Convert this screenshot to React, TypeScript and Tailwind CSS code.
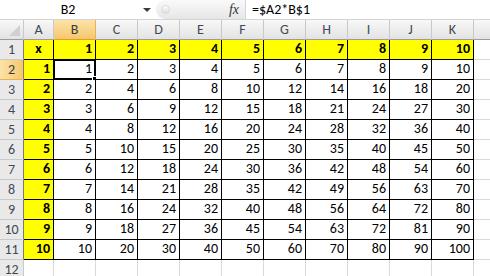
import React from 'react';

const COLS = ['A', 'B', 'C', 'D', 'E', 'F', 'G', 'H', 'I', 'J', 'K'];
const ROWS = [1, 2, 3, 4, 5, 6, 7, 8, 9, 10, 11, 12];

const font = { fontFamily: 'Carlito, Lato, "Open Sans", sans-serif' };

const FormulaBar = () => (
  <div className="flex h-[20px] border-b border-[#d4d4d4] bg-white">
    <div className="relative flex w-[156px] items-center justify-center">
      <span className="pr-[20px] text-[14px] text-black">B2</span>
      <span className="absolute right-[5px] top-[8px] h-0 w-0 border-x-[4px] border-t-[4px] border-x-transparent border-t-[#3c3c3c]" />
    </div>
    <div className="flex w-[89px] items-center rounded-l-full bg-gradient-to-b from-[#fafafa] to-[#e6e6e6] pl-[5px]">
      <span className="h-[9px] w-[9px] rounded-full border border-[#d9d9d9] bg-gradient-to-b from-[#fdfdfd] to-[#dcdcdc]" />
      <span className="ml-auto pr-[6px] text-[14px] italic text-[#333]" style={{ fontFamily: '"Liberation Serif", serif' }}>
        fx
      </span>
    </div>
    <div className="flex flex-1 items-center border-l border-[#d4d4d4] pl-[6px] text-[14px] text-black">=$A2*B$1</div>
  </div>
);

const ColHeader = ({ label }: { label: string }) => {
  const sel = label === 'B';
  return (
    <div
      className={
        'flex items-center justify-center border-b border-r text-[14px] ' +
        (sel
          ? 'border-b-[#e29a3b] border-r-[#e8b15a] bg-gradient-to-b from-[#fbe3a9] to-[#f5c76c] text-[#3a3a3a]'
          : 'border-b-[#9c9c9c] border-r-[#c9c9c9] bg-gradient-to-b from-[#f8f8f8] to-[#e3e3e3] text-[#3f4a56]')
      }
    >
      {label}
    </div>
  );
};

const RowHeader = ({ n }: { n: number }) => {
  const sel = n === 2;
  return (
    <div
      className={
        'flex items-center justify-center border-b text-[14px] ' +
        (n <= 11 ? 'border-r border-r-[#7a7a7a] ' : 'border-r border-r-[#c9c9c9] ') +
        (sel
          ? 'border-b-[#e8b15a] bg-gradient-to-r from-[#fbe3a9] to-[#f5c76c] text-[#3a3a3a]'
          : 'border-b-[#c9c9c9] bg-[#e9e9e9] text-[#3f4a56]')
      }
    >
      {n}
    </div>
  );
};

const Cell = ({ r, c }: { r: number; c: number }) => {
  if (r > 11) return <div className="border-b border-r border-[#dadada] bg-white" />;
  const yellow = r === 1 || c === 0;
  let text = '';
  if (r === 1) text = c === 0 ? 'x' : String(c);
  else text = c === 0 ? String(r - 1) : String((r - 1) * c);
  const active = r === 2 && c === 1;
  return (
    <div
      className={
        'relative flex items-end pb-[1px] text-[14px] leading-[18px] text-black border-b border-r border-black ' +
        (yellow ? 'bg-[#ffff00] font-bold ' : 'bg-white ') +
        (r === 1 && c === 0 ? 'justify-center' : 'justify-end pr-[3px]')
      }
    >
      {text}
      {active && (
        <>
          <span className="pointer-events-none absolute -left-[1px] -top-[1px] -right-[1px] -bottom-[1px] border-2 border-black" />
          <span className="absolute -bottom-[4px] -right-[4px] h-[7px] w-[7px] border border-white bg-black" />
        </>
      )}
    </div>
  );
};

export default function App() {
  return (
    <div className="h-[276px] w-[490px] overflow-hidden bg-white" style={font}>
      <FormulaBar />
      <div className="grid grid-cols-[24px_30px_repeat(10,42px)_1fr] grid-rows-[20px]" style={{ gridAutoRows: '20px' }}>
        <div className="relative border-b border-r border-b-[#9c9c9c] border-r-[#c9c9c9] bg-gradient-to-b from-[#f8f8f8] to-[#e3e3e3]">
          <span className="absolute bottom-[3px] right-[3px] h-0 w-0 border-l-[11px] border-t-[11px] border-l-transparent border-t-transparent border-b-0 border-r-0" style={{ borderBottom: '11px solid #d0d0d0', borderLeft: '11px solid transparent', borderTop: 0 }} />
        </div>
        {COLS.map(c => (
          <ColHeader key={c} label={c} />
        ))}
        <div className="border-b border-b-[#9c9c9c] bg-gradient-to-b from-[#f8f8f8] to-[#e3e3e3]" />
        {ROWS.map(r => (
          <React.Fragment key={r}>
            <RowHeader n={r} />
            {COLS.map((c, i) => (
              <Cell key={c} r={r} c={i} />
            ))}
            <div className="border-b border-[#dadada] bg-white" />
          </React.Fragment>
        ))}
      </div>
    </div>
  );
}
